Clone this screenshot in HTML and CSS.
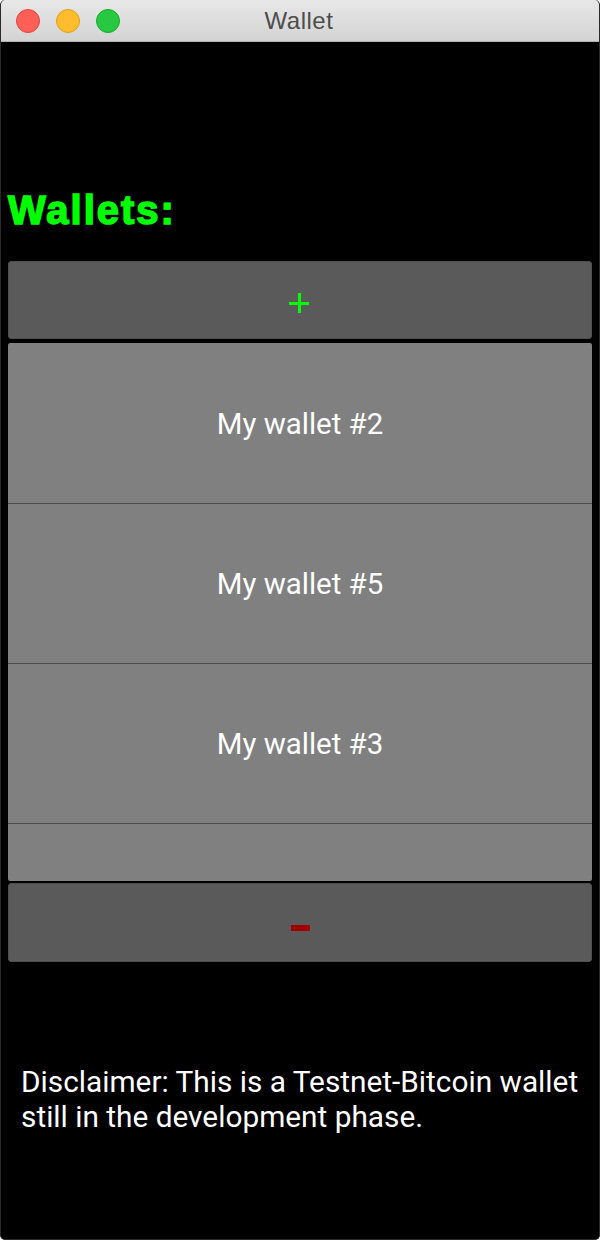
FILE: index.html
```html
<!DOCTYPE html>
<html lang="en">
<head>
<meta charset="utf-8">
<title>Wallet</title>
<link rel="stylesheet" href="styles.css">
</head>
<body>
<div class="window">
  <div class="titlebar">
    <div class="lights">
      <span class="light red"></span>
      <span class="light yellow"></span>
      <span class="light green"></span>
    </div>
    <div class="title">Wallet</div>
    <div></div>
  </div>
  <main class="content">
    <h1 class="heading">Wallets:</h1>
    <button class="action add" aria-label="+"><span class="plus"></span></button>
    <ul class="wallets">
      <li class="wallet">My wallet #2</li>
      <li class="wallet">My wallet #5</li>
      <li class="wallet">My wallet #3</li>
      <li class="wallet"></li>
    </ul>
    <button class="action remove" aria-label="−"><span class="minus"></span></button>
    <p class="disclaimer">Disclaimer: This is a Testnet-Bitcoin wallet<br>still in the development phase.</p>
  </main>
</div>
</body>
</html>
```

FILE: styles.css
```css
html, body {
  margin: 0;
  padding: 0;
  background: #ffffff;
}

.window {
  width: 600px;
  height: 1240px;
  box-sizing: border-box;
  background: #000000;
  border-radius: 5px;
  overflow: hidden;
  border: 1px solid #2a2a2a;
  border-top: none;
}

.titlebar {
  height: 41px;
  border-bottom: 1px solid #b4b4b4;
  background: linear-gradient(#e9e8e9, #d4d3d4);
  display: grid;
  grid-template-columns: 1fr auto 1fr;
  align-items: center;
}

.lights {
  display: flex;
  gap: 16px;
  padding-left: 15px;
  align-items: center;
}

.light {
  width: 22px;
  height: 22px;
  border-radius: 50%;
  display: block;
}

.light.red { background: #ff5f57; border: 1px solid #e2463f; }
.light.yellow { background: #ffbd2e; border: 1px solid #e1a116; }
.light.green { background: #28c940; border: 1px solid #12ac28; }

.title {
  font-family: "Liberation Sans", Arial, sans-serif;
  font-size: 24px;
  line-height: 41px;
  letter-spacing: 0.5px;
  color: #4d4d4d;
  margin-right: 2px;
}

.content {
  padding: 0 7px;
  display: flex;
  flex-direction: column;
}

.heading {
  margin: 148px 0 0 0;
  font-family: "Liberation Sans", Arial, sans-serif;
  font-weight: bold;
  font-size: 40px;
  line-height: 40px;
  letter-spacing: 2px;
  color: #00ff00;
  -webkit-text-stroke: 1.5px #00ff00;
}

.action {
  display: flex;
  align-items: center;
  justify-content: center;
  background: #5a5a5a;
  border: 1px solid #4e4e4e;
  border-radius: 3px;
  padding: 0;
  margin: 0;
  width: 100%;
  box-sizing: border-box;
  cursor: pointer;
}

.add {
  margin-top: 31px;
  height: 78px;
  padding-top: 6px;
  padding-right: 2px;
}

.plus {
  position: relative;
  display: block;
  width: 20px;
  height: 20px;
}

.plus::before,
.plus::after {
  content: "";
  position: absolute;
  background: #00ff00;
}

.plus::before {
  left: 0;
  right: 0;
  top: 9px;
  height: 3px;
}

.plus::after {
  top: 0;
  bottom: 0;
  left: 9px;
  width: 3px;
}

.wallets {
  list-style: none;
  margin: 4px 0 0 0;
  padding: 1px 0 0 0;
  height: 538px;
  box-sizing: border-box;
  overflow: hidden;
  background: #808080;
  border-radius: 2px;
}

.wallet {
  height: 160px;
  box-sizing: border-box;
  border-bottom: 1px solid #4d4d4d;
  display: flex;
  align-items: center;
  justify-content: center;
  font-family: Roboto, "Liberation Sans", sans-serif;
  font-size: 29.4px;
  color: #ffffff;
}

.remove {
  margin-top: 2px;
  height: 79px;
  padding-top: 11px;
}

.minus {
  display: block;
  width: 19px;
  height: 6px;
  background: #a00000;
}

.disclaimer {
  margin: 102px 0 0 0;
  padding-left: 13px;
  font-family: Roboto, "Liberation Sans", sans-serif;
  font-size: 29.8px;
  line-height: 35px;
  color: #ffffff;
  white-space: nowrap;
}
```
